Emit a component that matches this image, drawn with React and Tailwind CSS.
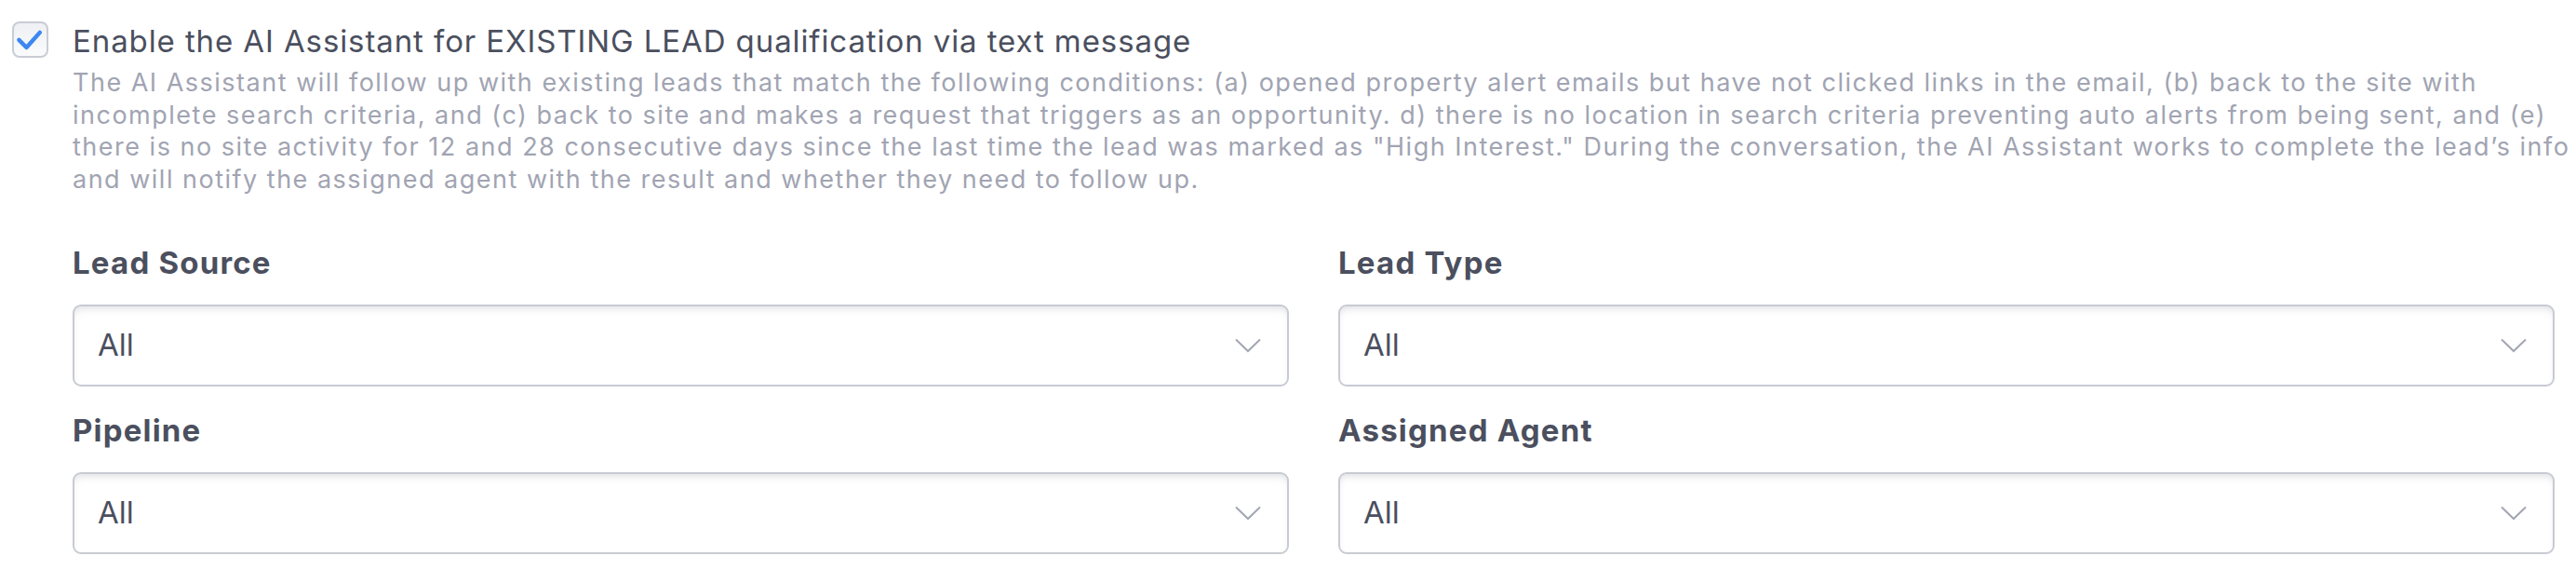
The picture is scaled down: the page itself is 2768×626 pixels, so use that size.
import { useState } from "react";

const fields = [
  { label: "Lead Source", value: "All" },
  { label: "Lead Type", value: "All" },
  { label: "Pipeline", value: "All" },
  { label: "Assigned Agent", value: "All" },
];

function Chevron() {
  return (
    <svg width="28" height="16" viewBox="0 0 28 16" fill="none">
      <path d="M1 1.5L14 14L27 1.5" stroke="#a3a6b3" strokeWidth="2" />
    </svg>
  );
}

function SelectBox({ label, value }) {
  return (
    <div className="flex flex-col gap-[25px]">
      <div className="text-[33px] leading-[40px] font-bold tracking-[1.2px] text-[#4b4f5e]">
        {label}
      </div>
      <div className="h-[88px] flex items-center justify-between pl-[25px] pr-[28px] rounded-[9px] border-2 border-[#c8cbd2] bg-white shadow-[inset_0_6px_8px_-4px_rgba(120,125,140,0.25)]">
        <span className="text-[33px] text-[#4b4f5e]">{value}</span>
        <Chevron />
      </div>
    </div>
  );
}

export default function App() {
  const [checked, setChecked] = useState(true);

  return (
    <div className="w-full h-[626px] bg-white font-['Inter',sans-serif] pl-[13px] pr-[23px] pt-[23px]">
      <div className="flex gap-[26px]">
        <button
          onClick={() => setChecked(!checked)}
          className="w-[39px] h-[39px] shrink-0 flex items-center justify-center rounded-[8px] border-2 border-[#c9ccd4] bg-gradient-to-b from-[#eef0f4] to-[#fafbfc]"
        >
          {checked && (
            <svg width="39" height="39" viewBox="0 0 39 39" fill="none">
              <path
                d="M6 20L15 29L31 11"
                stroke="#3d87f1"
                strokeWidth="5"
                strokeLinecap="round"
                strokeLinejoin="round"
              />
            </svg>
          )}
        </button>

        <div className="flex-1">
          <div className="pt-px text-[33px] leading-[40px] tracking-[0.9px] text-[#4b4f5e]">
            Enable the AI Assistant for EXISTING LEAD qualification via text message
          </div>
          <p className="mt-[8px] -mr-[22px] text-[27px] leading-[34.5px] tracking-[1.5px] text-[#a1a4b2]">
            The AI Assistant will follow up with existing leads that match the
            following conditions: (a) opened property alert emails but have not
            clicked links in the email, (b) back to the site with incomplete
            search criteria, and (c) back to site and makes a request that
            triggers as an opportunity. d) there is no location in search
            criteria preventing auto alerts from being sent, and (e) there is no
            site activity for 12 and 28 consecutive days since the last time the
            lead was marked as "High Interest." During the conversation, the AI
            Assistant works to complete the lead’s info and will notify the
            assigned agent with the result and whether they need to follow up.
          </p>

          <div className="mt-[52px] grid grid-cols-2 gap-x-[53px] gap-y-[27px]">
            {fields.map((f) => (
              <SelectBox key={f.label} label={f.label} value={f.value} />
            ))}
          </div>
        </div>
      </div>
    </div>
  );
}
